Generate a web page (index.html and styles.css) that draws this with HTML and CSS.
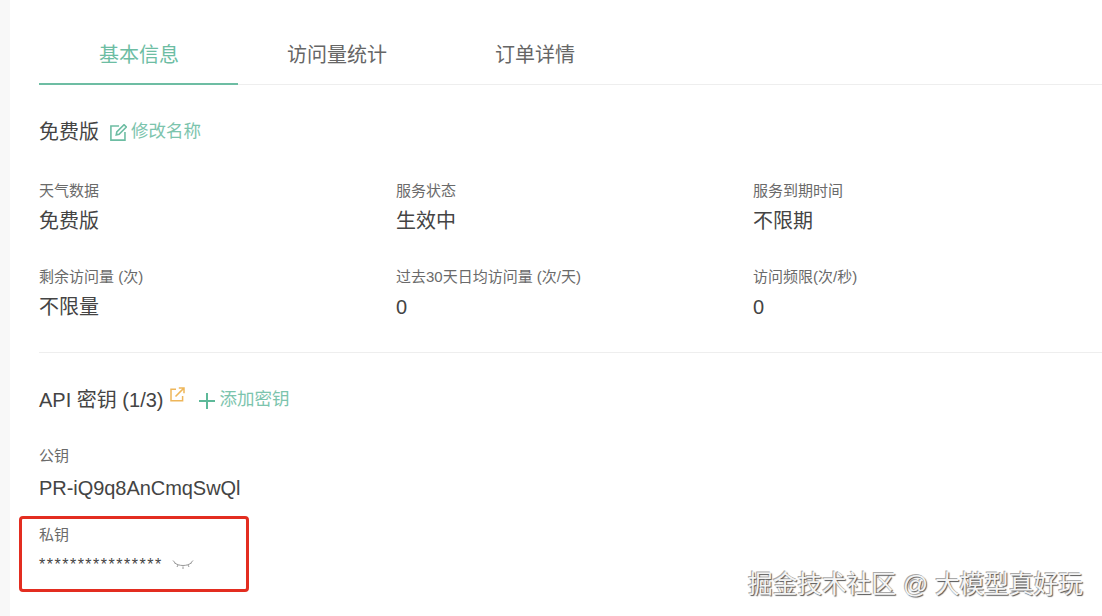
FILE: index.html
```html
<!DOCTYPE html>
<html lang="zh">
<head>
<meta charset="utf-8">
<title>基本信息</title>
<link rel="stylesheet" href="styles.css">
</head>
<body>
<div class="page">
  <aside class="strip"></aside>
  <main class="main">
    <nav class="tabs">
      <div class="tab active">基本信息</div>
      <div class="tab">访问量统计</div>
      <div class="tab">订单详情</div>
    </nav>
    <section class="head">
      <span class="title">免费版</span>
      <a class="link rename">
        <svg class="edit" viewBox="1 1 15 15" width="17" height="17" fill="none" stroke="#6dbda3" stroke-width="1.4"><path d="M9 2.8H1.8v12.4h12.4V8"/><path d="M6.5 10.6l.5-2.6L13.4 1.6l2 2L9 10l-2.5.6z"/></svg>修改名称
      </a>
    </section>
    <section class="grid">
      <div class="cell"><div class="label">天气数据</div><div class="value">免费版</div></div>
      <div class="cell"><div class="label">服务状态</div><div class="value">生效中</div></div>
      <div class="cell"><div class="label">服务到期时间</div><div class="value">不限期</div></div>
      <div class="cell"><div class="label">剩余访问量 (次)</div><div class="value">不限量</div></div>
      <div class="cell"><div class="label">过去30天日均访问量 (次/天)</div><div class="value">0</div></div>
      <div class="cell"><div class="label">访问频限(次/秒)</div><div class="value">0</div></div>
    </section>
    <section class="api">
      <span class="title">API 密钥 (1/3)</span>
      <svg class="ext" viewBox="0 0 15 15" width="15" height="15" fill="none" stroke="#eeb65a" stroke-width="1.5"><path d="M6 2.2H1v11.6h11.6V9"/><path d="M5.5 9.5L13.6 1.4M8.8 1h5.2v5.2"/></svg>
      <a class="link add">
        <svg class="plus" viewBox="0 0 16 16" width="16" height="16" stroke="#5db999" stroke-width="2"><path d="M8 0v16M0 8h16"/></svg>添加密钥
      </a>
    </section>
    <section class="key public">
      <div class="label">公钥</div>
      <div class="value">PR-iQ9q8AnCmqSwQl</div>
    </section>
    <section class="key private">
      <div class="label">私钥</div>
      <div class="secret">
        <span class="stars">****************</span>
        <svg class="eye" viewBox="0 0 22 12" width="22" height="12" fill="none" stroke="#8c8c8c" stroke-width="0.9"><path d="M2 3.5c5 4 13 4 18 0"/><path d="M1 1.5l2 2.2M21 1.5l-2 2.2M6 6l-1 2M16 6l1 2M11 7.5V10"/></svg>
      </div>
    </section>
  </main>
  <div class="highlight"></div>
  <div class="watermark">掘金技术社区 @ 大模型真好玩</div>
</div>
</body>
</html>
```
FILE: styles.css
```css
* { box-sizing: border-box; }
html, body { margin: 0; padding: 0; height: 100%; overflow: hidden; background: #fff; }
body { font-family: "Liberation Sans", "Noto Sans CJK SC", sans-serif; color: #333; }
.page { position: relative; display: flex; width: 1102px; height: 616px; overflow: hidden; }
.strip { width: 10px; background: #f8f8f8; flex: none; }
.main { flex: 1; padding-left: 29px; min-width: 0; }
.tabs { display: flex; height: 85px; border-bottom: 1px solid #eeeeee; }
.tab { padding: 42px 59px 0 49px; font-size: 20px; line-height: 26px; color: #666; height: 85px; }
.tab.active { padding-left: 60px; color: #6dbda3; border-bottom: 2px solid #6dbda3; }
.head { display: flex; align-items: center; height: 30px; margin-top: 32px; }
.title { font-size: 20px; line-height: 30px; color: #444; }
.link { display: inline-flex; align-items: center; font-size: 17.5px; line-height: 24px; color: #7cc4ad; margin-bottom: 2px; }
.rename { margin-left: 11px; }
.edit { margin: 2px 4px 0 0; }
.grid { display: grid; grid-template-columns: 357px 357px 1fr; row-gap: 31px; margin-top: 34px; padding-bottom: 30px; border-bottom: 1px solid #eeeeee; }
.label { font-size: 15px; line-height: 20px; color: #6a6a6a; }
.value { font-size: 20px; line-height: 30px; color: #444; margin-top: 5px; }
.api { display: flex; align-items: center; height: 30px; margin-top: 32px; }
.ext { margin: -11px 0 0 7px; }
.add { margin-left: 14px; }
.plus { margin: 4px 4px 0 0; }
.public { margin-top: 31px; }
.public .value { margin-top: 7px; letter-spacing: -0.05px; }
.private { margin-top: 22px; }
.secret { display: flex; align-items: center; height: 20px; margin-top: 10px; }
.stars { font-size: 16px; line-height: 20px; color: #444; letter-spacing: 1.5px; width: 133px; }
.eye { margin-top: 0; }
.highlight { position: absolute; left: 19px; top: 516px; width: 230px; height: 76px; border: 3px solid #e32d20; border-radius: 4px; }
.watermark { position: absolute; left: 748px; top: 570px; font-size: 24.7px; line-height: 30px; color: #f4f4f4; white-space: nowrap; text-shadow: 1px 1px 1px #555, -1px -1px 0 #aaa; }
```
